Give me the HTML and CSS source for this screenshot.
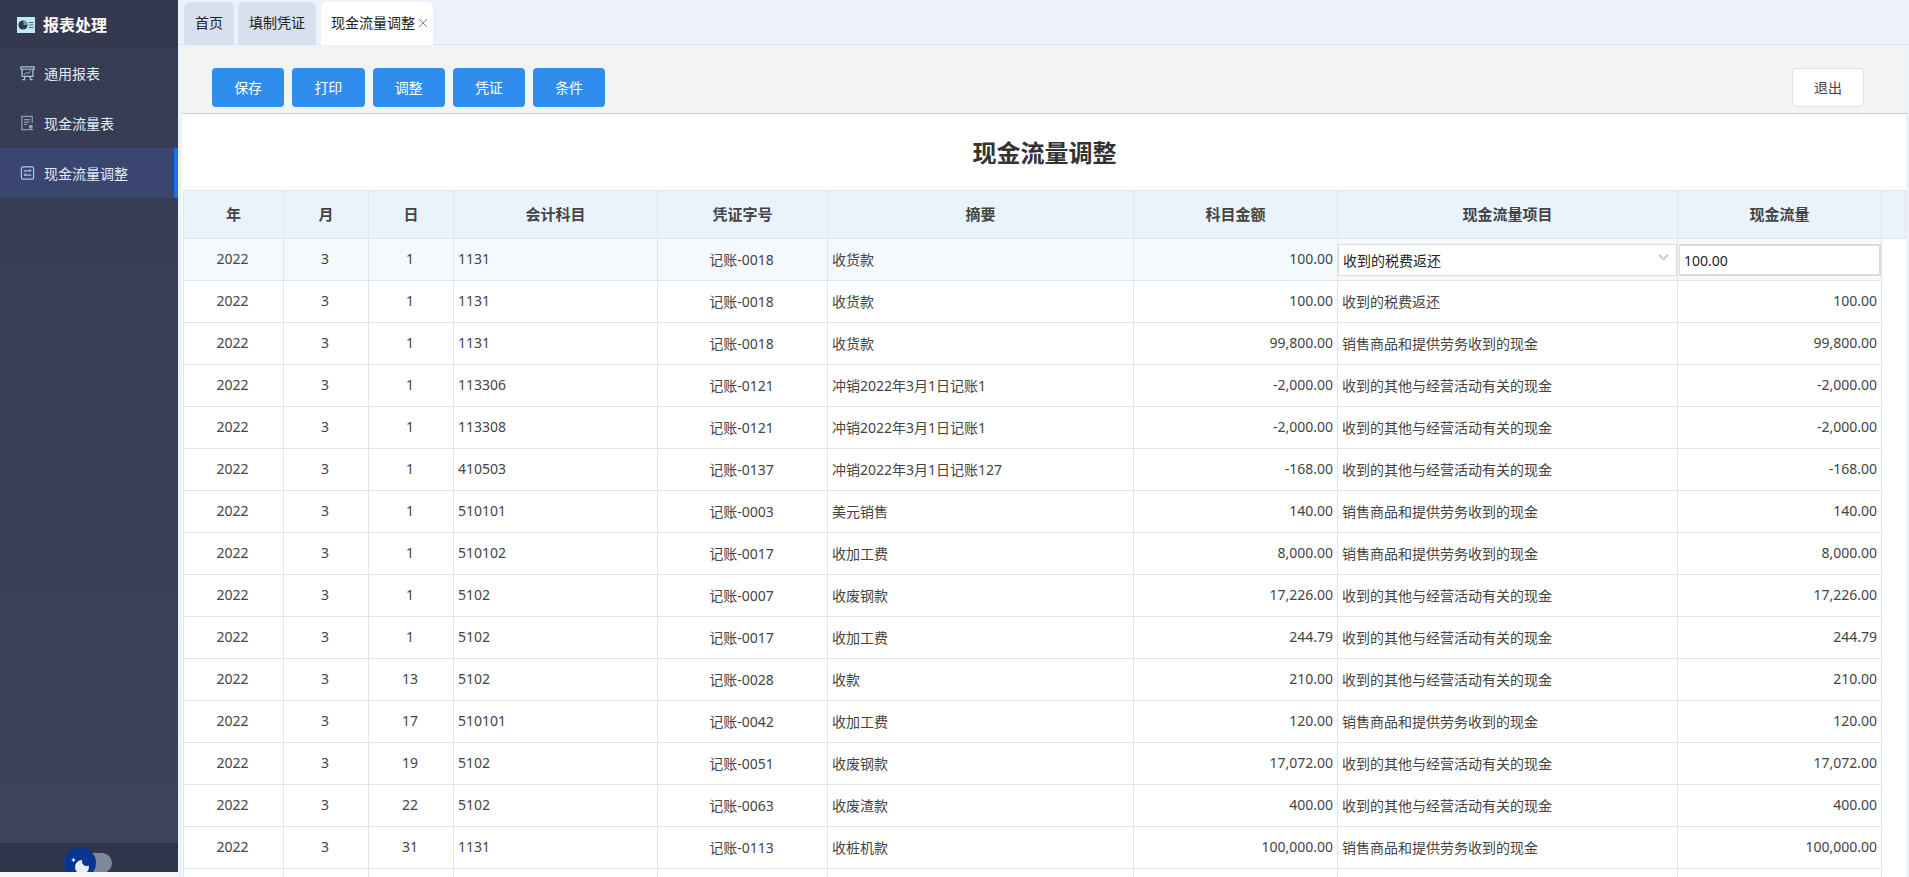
FILE: index.html
```html
<!DOCTYPE html>
<html lang="zh-CN">
<head>
<meta charset="utf-8">
<title>现金流量调整</title>
<link rel="stylesheet" href="styles.css">
</head>
<body>
<div class="app">
  <aside class="sidebar">
    <div class="side-inner">
      <div class="brand">
        <svg class="logo" viewBox="0 0 18 16"><rect width="18" height="16" fill="#bfe9f7"/><circle cx="6" cy="8" r="4.6" fill="#2f3a52"/><path d="M6.500 8V3.400A4.600 4.600 0 0 1 10.800 8Z" fill="#7c98ab"/><path d="M12 5.500h4.500M12 8h4.500M12 10.500h4.500" stroke="#4c5f75" stroke-width="1.100"/></svg>
        <span>报表处理</span>
      </div>
      <nav class="menu">
        <a class="item">
          <svg class="ico" viewBox="0 0 16 16" fill="none" stroke="#a9c8d6" stroke-width="1.300"><path d="M1 1.500h14v2.500H1zM2.200 4v7.500h11.600V4M4.500 15l1-3.500M11.500 15l-1-3.500M2.500 15h3M10.500 15h3"/><path d="M4.500 9.500l2.500-2 1.500 1 3-2.500" stroke-width="1"/></svg>
          <span>通用报表</span>
        </a>
        <a class="item">
          <svg class="ico" viewBox="0 0 16 16" fill="none" stroke="#8aa2b3" stroke-width="1.300"><path d="M13 8V1h-11v14H8M4.500 4.500h6M4.500 7h6M4.500 9.500h3"/><circle cx="11.500" cy="12" r="2.200" fill="#8aa2b3" stroke="none"/><path d="M8.500 15h5.500"/></svg>
          <span>现金流量表</span>
        </a>
        <a class="item active">
          <svg class="ico" viewBox="0 0 16 16" fill="none" stroke="#a4cbdd" stroke-width="1.300"><rect x="1.500" y="1.500" width="13" height="13" rx="1.500"/><path d="M4 5.800h8M4 10.200h8M10 4.300l2 1.500M6 8.700l-2 1.500"/></svg>
          <span>现金流量调整</span>
        </a>
      </nav>
      <div class="side-foot">
        <div class="toggle">
          <div class="knob">
            <svg class="moon" viewBox="0 0 32 32"><circle class="moon-body" cx="18" cy="20" r="7"/><circle class="moon-bite" cx="22.500" cy="14.500" r="4.500"/><path class="moon-body" d="M9.500 10.500l.8 1.700 1.700.8-1.700.8-.8 1.700-.8-1.700-1.700-.8 1.700-.8z"/></svg>
          </div>
        </div>
      </div>
    </div>
  </aside>
  <main class="main">
    <div class="tabs">
      <div class="tab">首页</div>
      <div class="tab">填制凭证</div>
      <div class="tab current">现金流量调整<svg class="close" viewBox="0 0 10 10"><path d="M1 1l8 8M9 1l-8 8" stroke="#888" stroke-width="1" fill="none"/></svg></div>
    </div>
    <div class="panel">
      <div class="toolbar">
        <button class="btn primary">保存</button>
        <button class="btn primary">打印</button>
        <button class="btn primary">调整</button>
        <button class="btn primary">凭证</button>
        <button class="btn primary">条件</button>
        <button class="btn exit">退出</button>
      </div>
      <div class="sheet">
        <h1 class="title">现金流量调整</h1>
        <table class="grid">
          <colgroup>
            <col class="c-y"><col class="c-m"><col class="c-d"><col class="c-acc"><col class="c-no"><col class="c-sum"><col class="c-amt"><col class="c-item"><col class="c-flow"><col class="c-gut">
          </colgroup>
          <thead>
            <tr><th>年</th><th>月</th><th>日</th><th>会计科目</th><th>凭证字号</th><th>摘要</th><th>科目金额</th><th>现金流量项目</th><th>现金流量</th><th></th></tr>
          </thead>
          <tbody>
            <tr class="editing"><td class="ce">2022</td><td class="ce">3</td><td class="ce">1</td><td>1131</td><td class="ce">记账-0018</td><td>收货款</td><td class="nu">100.00</td>
              <td class="edit"><div class="fake-select">收到的税费返还<svg class="chev" viewBox="0 0 12 8"><path d="M1 1.500l5 5 5-5" stroke="#c4c4c4" stroke-width="2" fill="none"/></svg></div></td>
              <td class="edit"><div class="fake-input">100.00</div></td><td class="gut"></td></tr>
            <tr><td class="ce">2022</td><td class="ce">3</td><td class="ce">1</td><td>1131</td><td class="ce">记账-0018</td><td>收货款</td><td class="nu">100.00</td><td>收到的税费返还</td><td class="nu">100.00</td><td class="gut"></td></tr>
            <tr><td class="ce">2022</td><td class="ce">3</td><td class="ce">1</td><td>1131</td><td class="ce">记账-0018</td><td>收货款</td><td class="nu">99,800.00</td><td>销售商品和提供劳务收到的现金</td><td class="nu">99,800.00</td><td class="gut"></td></tr>
            <tr><td class="ce">2022</td><td class="ce">3</td><td class="ce">1</td><td>113306</td><td class="ce">记账-0121</td><td>冲销2022年3月1日记账1</td><td class="nu">-2,000.00</td><td>收到的其他与经营活动有关的现金</td><td class="nu">-2,000.00</td><td class="gut"></td></tr>
            <tr><td class="ce">2022</td><td class="ce">3</td><td class="ce">1</td><td>113308</td><td class="ce">记账-0121</td><td>冲销2022年3月1日记账1</td><td class="nu">-2,000.00</td><td>收到的其他与经营活动有关的现金</td><td class="nu">-2,000.00</td><td class="gut"></td></tr>
            <tr><td class="ce">2022</td><td class="ce">3</td><td class="ce">1</td><td>410503</td><td class="ce">记账-0137</td><td>冲销2022年3月1日记账127</td><td class="nu">-168.00</td><td>收到的其他与经营活动有关的现金</td><td class="nu">-168.00</td><td class="gut"></td></tr>
            <tr><td class="ce">2022</td><td class="ce">3</td><td class="ce">1</td><td>510101</td><td class="ce">记账-0003</td><td>美元销售</td><td class="nu">140.00</td><td>销售商品和提供劳务收到的现金</td><td class="nu">140.00</td><td class="gut"></td></tr>
            <tr><td class="ce">2022</td><td class="ce">3</td><td class="ce">1</td><td>510102</td><td class="ce">记账-0017</td><td>收加工费</td><td class="nu">8,000.00</td><td>销售商品和提供劳务收到的现金</td><td class="nu">8,000.00</td><td class="gut"></td></tr>
            <tr><td class="ce">2022</td><td class="ce">3</td><td class="ce">1</td><td>5102</td><td class="ce">记账-0007</td><td>收废钢款</td><td class="nu">17,226.00</td><td>收到的其他与经营活动有关的现金</td><td class="nu">17,226.00</td><td class="gut"></td></tr>
            <tr><td class="ce">2022</td><td class="ce">3</td><td class="ce">1</td><td>5102</td><td class="ce">记账-0017</td><td>收加工费</td><td class="nu">244.79</td><td>收到的其他与经营活动有关的现金</td><td class="nu">244.79</td><td class="gut"></td></tr>
            <tr><td class="ce">2022</td><td class="ce">3</td><td class="ce">13</td><td>5102</td><td class="ce">记账-0028</td><td>收款</td><td class="nu">210.00</td><td>收到的其他与经营活动有关的现金</td><td class="nu">210.00</td><td class="gut"></td></tr>
            <tr><td class="ce">2022</td><td class="ce">3</td><td class="ce">17</td><td>510101</td><td class="ce">记账-0042</td><td>收加工费</td><td class="nu">120.00</td><td>销售商品和提供劳务收到的现金</td><td class="nu">120.00</td><td class="gut"></td></tr>
            <tr><td class="ce">2022</td><td class="ce">3</td><td class="ce">19</td><td>5102</td><td class="ce">记账-0051</td><td>收废钢款</td><td class="nu">17,072.00</td><td>收到的其他与经营活动有关的现金</td><td class="nu">17,072.00</td><td class="gut"></td></tr>
            <tr><td class="ce">2022</td><td class="ce">3</td><td class="ce">22</td><td>5102</td><td class="ce">记账-0063</td><td>收废渣款</td><td class="nu">400.00</td><td>收到的其他与经营活动有关的现金</td><td class="nu">400.00</td><td class="gut"></td></tr>
            <tr><td class="ce">2022</td><td class="ce">3</td><td class="ce">31</td><td>1131</td><td class="ce">记账-0113</td><td>收桩机款</td><td class="nu">100,000.00</td><td>销售商品和提供劳务收到的现金</td><td class="nu">100,000.00</td><td class="gut"></td></tr>
            <tr><td></td><td></td><td></td><td></td><td></td><td></td><td></td><td></td><td></td><td class="gut"></td></tr>
          </tbody>
        </table>
      </div>
    </div>
  </main>
</div>
</body>
</html>
```
FILE: styles.css
```css
* { box-sizing: border-box; }
html, body { margin: 0; height: 100%; overflow: hidden; }
body {
  font-family: "Noto Sans", "Noto Sans CJK SC", sans-serif;
  font-size: 14px;
  color: #444;
  background: #edf1f9;
}
.app { display: flex; height: 877px; }

/* sidebar */
.sidebar { width: 178px; flex: none; height: 877px; background: #f6f6f6; }
.side-inner {
  height: 872px;
  display: flex;
  flex-direction: column;
  background: linear-gradient(180deg, #363c53 0%, #3c4459 100%);
  overflow: hidden;
}
.brand {
  height: 48px;
  display: flex;
  align-items: center;
  padding-left: 17px;
  background: #343950;
  color: #fff;
  font-size: 16px;
  font-weight: 700;
}
.logo { width: 18px; height: 16px; margin-right: 8px; margin-top: 1px; }
.menu { flex: 1; }
.item {
  display: flex;
  align-items: center;
  height: 50px;
  padding-left: 20px;
  color: #e6ebf0;
  font-size: 14px;
}
.item.active { background: #3a4670; border-right: 4px solid #1670f0; }
.ico { width: 15px; height: 16px; margin-right: 9px; flex: none; }
.side-foot { height: 29px; background: #31364c; padding: 10px 0 0 64px; }
.toggle { position: relative; width: 48px; height: 20px; border-radius: 10px; background: #7d8a99; }
.knob {
  position: absolute;
  left: 0;
  top: -6px;
  width: 32px;
  height: 32px;
  border-radius: 50%;
  background: #08368f;
}
.moon { display: block; width: 32px; height: 32px; }
.moon-body { fill: #e9edf2; }
.moon-bite { fill: #08368f; }

/* tabs */
.main { flex: 1; min-width: 0; display: flex; flex-direction: column; height: 877px; }
.tabs {
  height: 45px;
  flex: none;
  display: flex;
  align-items: flex-end;
  padding-left: 6px;
  gap: 4px;
  border-bottom: 1px solid #dce1ea;
}
.tab {
  height: 43px;
  display: flex;
  align-items: center;
  padding: 0 11px 3px;
  background: #d7e0ef;
  border-radius: 6px 6px 0 0;
  color: #222;
  font-size: 14px;
  margin-bottom: -1px;
}
.tab.current { background: #fff; padding: 0 5px 3px 10px; margin-left: 1px; }
.close { width: 10px; height: 10px; margin-left: 3px; margin-top: 1px; }

/* panel */
.panel { flex: 1; min-height: 0; margin: 1px 1px 0 4px; display: flex; flex-direction: column; }
.toolbar {
  height: 68px;
  flex: none;
  display: flex;
  gap: 8px;
  padding: 22px 44px 0 30px;
  background: #f3f3f3;
  border-bottom: 1px solid #c9c9c9;
  border-radius: 6px 6px 0 0;
}
.btn {
  width: 72.25px;
  height: 39px;
  border-radius: 4px;
  border: 1px solid transparent;
  font: inherit;
  padding: 0 0 2px;
}
.primary { background: #2f8dee; color: #fff; }
.exit { margin-left: auto; background: #fff; border-color: #e2e2e2; color: #444; width: 72px; }

/* sheet */
.sheet { flex: 1; min-height: 0; background: #fff; margin-right: 2px; padding-left: 1px; overflow: hidden; }
.title {
  margin: 0;
  height: 76px;
  padding-bottom: 2px;
  display: flex;
  align-items: center;
  justify-content: center;
  font-size: 24px;
  font-weight: 700;
  color: #333;
}
.grid {
  table-layout: fixed;
  border-collapse: collapse;
  width: 1722px;
}
.c-y { width: 100px; }
.c-m { width: 85px; }
.c-d { width: 85px; }
.c-acc { width: 204px; }
.c-no { width: 170px; }
.c-sum { width: 306px; }
.c-amt { width: 204px; }
.c-item { width: 340px; }
.c-flow { width: 204px; }
.c-gut { width: 24px; }
.grid th {
  height: 48px;
  background: #e8f3fc;
  border: 1px solid #e2e6ea;
  color: #444;
  font-weight: 700;
  font-size: 15px;
  padding: 0 0 2px;
}
.grid td {
  height: 42px;
  border: 1px solid #e4e4e4;
  padding: 0 4px 2px 4px;
  color: #444;
  white-space: nowrap;
  overflow: hidden;
}
.grid td.ce { text-align: center; padding-left: 3px; padding-right: 5px; }
.grid td.nu { text-align: right; }
.grid td.gut { border-top: 0; border-bottom: 0; border-right: 0; }
.editing td { background: #f4f9fd; }
.editing td.gut { background: #fff; }
.grid td.edit { padding: 0; }
.fake-select, .fake-input {
  height: 32px;
  background: #fff;
  border: 1px solid #dcdcdc;
  color: #222;
  display: flex;
  align-items: center;
  padding: 1px 0 0 4px;
}
.fake-input { padding-left: 4px; margin-left: 1px; border-width: 2px 2px 2px 1px; }
.fake-select { justify-content: space-between; padding-right: 7px; }
.chev { width: 11px; height: 8px; margin-top: -6px; }
```
